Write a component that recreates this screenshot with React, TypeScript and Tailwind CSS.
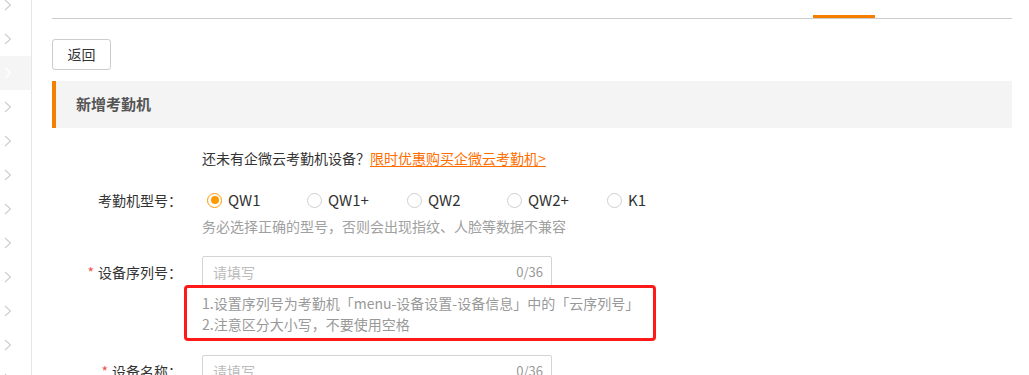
import React from "react";

const FONT = { fontFamily: '"Noto Sans CJK SC", "Noto Sans", sans-serif' };

function Chevron({ white }: { white?: boolean }) {
  return (
    <svg width="8" height="12" viewBox="0 0 8 12" className="block">
      <polyline points="1,1 6.5,6 1,11" fill="none" stroke={white ? "#ffffff" : "#cfcfcf"} strokeWidth="1.2" />
    </svg>
  );
}

function Sidebar() {
  const rows = Array.from({ length: 12 });
  return (
    <div className="w-[32px] shrink-0 border-r border-[#e6e6e6] h-[375px] overflow-hidden">
      <div className="mt-[-12px] flex flex-col">
        {rows.map((_, i) => (
          <div key={i} className={`h-[34px] flex items-center pl-[4px] ${i === 2 ? "bg-[#f5f5f5]" : ""}`}>
            <Chevron white={i === 2} />
          </div>
        ))}
      </div>
    </div>
  );
}

const tabs = [
  { t: "考勤规则", w: "w-[108px]" },
  { t: "排班管理", w: "w-[106px]" },
  { t: "考勤组", w: "w-[90px]" },
  { t: "考勤统计", w: "w-[95px]" },
  { t: "假期审批设置", w: "w-[121px]" },
  { t: "考勤设置", w: "w-[106px]" },
];

function Tabs() {
  return (
    <div className="h-[19px] border-b border-[#cccccc] flex overflow-hidden">
      <div className="w-[135px] shrink-0" />
      {tabs.map((x) => (
        <div key={x.t} className={`${x.w} shrink-0 flex justify-center`}>
          <span className="text-[14px] leading-[14px] mt-[-15px] text-[#333]">{x.t}</span>
        </div>
      ))}
      <div className="w-[62px] shrink-0 flex flex-col items-center justify-between">
        <span className="text-[14px] leading-[14px] mt-[-15px] text-[#f77f00]">考勤机</span>
        <div className="h-[3px] w-full bg-[#f77f00]" />
      </div>
    </div>
  );
}

function Radio({ label, checked }: { label: string; checked?: boolean }) {
  return (
    <div className="w-[100px] flex items-center">
      <span
        className={`ml-[5px] w-[15px] h-[15px] rounded-full border flex items-center justify-center bg-white ${
          checked ? "border-[#f90]" : "border-[#cfcfcf]"
        }`}
      >
        {checked && <span className="w-[8px] h-[8px] rounded-full bg-[#f90]" />}
      </span>
      <span className="ml-[6px] text-[15px] text-[#333]">{label}</span>
    </div>
  );
}

function Label({ text, required }: { text: string; required?: boolean }) {
  return (
    <div className="w-[150px] shrink-0 pr-[20px] text-right text-[14px] text-[#333]">
      {required && <span className="text-[#f0544f] mr-[4px]">*</span>}
      {text}
    </div>
  );
}

function Input() {
  return (
    <div className="w-[350px] h-[32px] border border-[#d4d4d4] rounded-[2px] flex items-center justify-between px-[10px] text-[14px]">
      <span className="text-[#bbbbbb]">请填写</span>
      <span className="text-[#999] text-[13px] mr-[-2px]">0/36</span>
    </div>
  );
}

export default function App() {
  return (
    <div className="w-[1029px] h-[375px] bg-white flex overflow-hidden" style={FONT}>
      <Sidebar />
      <div className="flex-1 pl-[20px] pr-[17px]">
        <Tabs />
        <button className="mt-[20px] w-[59px] h-[31px] border border-[#cccccc] rounded-[3px] text-[14px] text-[#333] bg-white">
          返回
        </button>
        <div className="mt-[11px] h-[47px] bg-[#f4f4f4] flex items-center border-l-[4px] border-[#f77f00]">
          <span className="ml-[20px] text-[15px] font-bold text-[#555]">新增考勤机</span>
        </div>

        <div className="mt-[20px] flex items-center h-[20px]">
          <div className="w-[150px] shrink-0" />
          <span className="text-[14px] text-[#333]">还未有企微云考勤机设备？</span>
          <span className="text-[14px] text-[#ff6f00] underline underline-offset-2"> 限时优惠购买企微云考勤机&gt;</span>
        </div>

        <div className="mt-[22px] flex items-center h-[20px]">
          <Label text="考勤机型号：" />
          <Radio label="QW1" checked />
          <Radio label="QW1+" />
          <Radio label="QW2" />
          <Radio label="QW2+" />
          <Radio label="K1" />
        </div>
        <div className="mt-[6px] flex items-center h-[20px]">
          <div className="w-[150px] shrink-0" />
          <span className="text-[14px] text-[#a0a0a0]">务必选择正确的型号，否则会出现指纹、人脸等数据不兼容</span>
        </div>

        <div className="mt-[20px] flex items-center">
          <Label text="设备序列号：" required />
          <Input />
        </div>
        <div className="mt-[5px] flex">
          <div className="w-[150px] shrink-0" />
          <div className="relative text-[14px] leading-[21px] text-[#999]">
            <div>1.设置序列号为考勤机「menu-设备设置-设备信息」中的「云序列号」</div>
            <div>2.注意区分大小写，不要使用空格</div>
            <div className="absolute left-[-18px] top-[-8px] w-[472px] h-[56px] border-[3px] border-[#ff1a1a] rounded-[4px]" />
          </div>
        </div>

        <div className="mt-[20px] flex items-center">
          <Label text="设备名称：" required />
          <Input />
        </div>
      </div>
    </div>
  );
}
